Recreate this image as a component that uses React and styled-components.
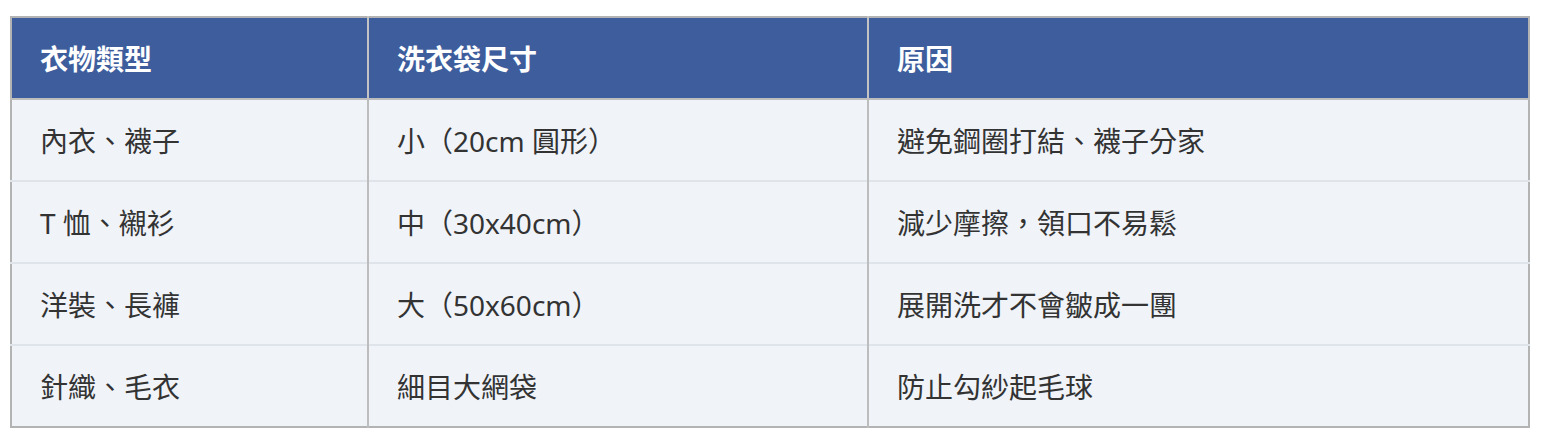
import React from "react";
import styled, { createGlobalStyle } from "styled-components";

const GlobalStyle = createGlobalStyle`
  body {
    margin: 0;
    background: #ffffff;
    font-family: "Noto Sans", "Noto Sans CJK TC", sans-serif;
  }
`;

const Page = styled.div`
  padding: 16px 14px 0 10px;
`;

const Table = styled.table`
  width: 1520px;
  border-collapse: collapse;
  table-layout: fixed;
  border: 2px solid #b3b3b3;
`;

const HeadCell = styled.th`
  height: 80px;
  padding: 0 28px;
  background: #3d5d9d;
  color: #ffffff;
  font-size: 28px;
  font-weight: 700;
  text-align: left;
  border-left: 2px solid #c3c3c3;
  border-bottom: 2px solid #bdbdbd;
  &:first-child {
    border-left: none;
  }
`;

const Row = styled.tr`
  background: #f0f4f9;
  & + & td {
    border-top: 2px solid #dfe3ea;
  }
`;

const Cell = styled.td`
  height: 80px;
  padding: 0 28px;
  color: #333333;
  font-size: 28px;
  font-weight: 400;
  border-left: 2px solid #bdbdbd;
  white-space: nowrap;
  &:first-child {
    border-left: none;
  }
`;

const rows = [
  ["內衣、襪子", "小（20cm 圓形）", "避免鋼圈打結、襪子分家"],
  ["T 恤、襯衫", "中（30x40cm）", "減少摩擦，領口不易鬆"],
  ["洋裝、長褲", "大（50x60cm）", "展開洗才不會皺成一團"],
  ["針織、毛衣", "細目大網袋", "防止勾紗起毛球"],
];

const App = () => {
  return (
    <Page>
      <GlobalStyle />
      <Table>
        <colgroup>
          <col style={{ width: "357px" }} />
          <col style={{ width: "500px" }} />
          <col />
        </colgroup>
        <thead>
          <tr>
            <HeadCell>衣物類型</HeadCell>
            <HeadCell>洗衣袋尺寸</HeadCell>
            <HeadCell>原因</HeadCell>
          </tr>
        </thead>
        <tbody>
          {rows.map((r) => (
            <Row key={r[0]}>
              {r.map((c) => (
                <Cell key={c}>{c}</Cell>
              ))}
            </Row>
          ))}
        </tbody>
      </Table>
    </Page>
  );
};

export default App;
